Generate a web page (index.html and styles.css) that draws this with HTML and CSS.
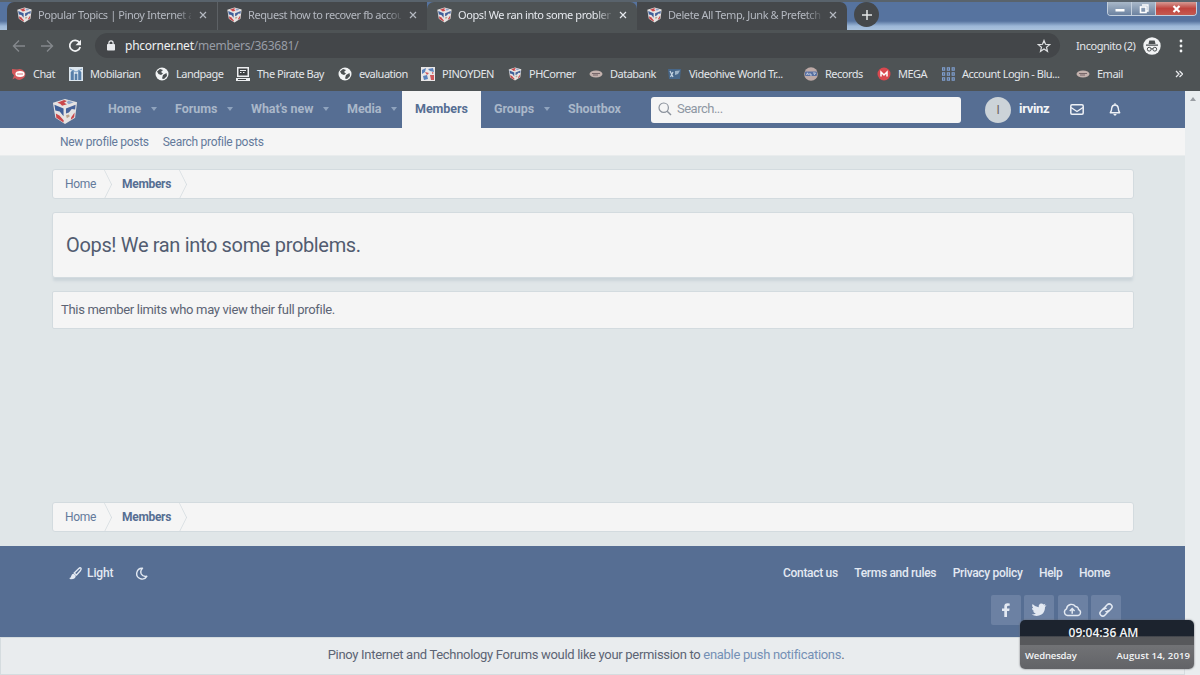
FILE: index.html
```html
<!DOCTYPE html>
<html lang="en">
<head>
  <meta charset="utf-8">
  <title>Oops! We ran into some problems.</title>
  <link rel="stylesheet" href="styles.css">
</head>
<body>
  <svg class="defs" width="0" height="0">
    <symbol id="cube" viewBox="0 0 26 28">
      <path d="M.5 5 L13 1 L25.500 4.500 L23.500 20.500 L13 27 L3 20.500 Z" fill="#e6e3e2"/>
      <path d="M5 5 L12 2 L15 3 L12 5 L15 6.500 L10 8 L8 6 Z" fill="#c9474b"/>
      <path d="M16 2.500 L22 4.500 L17 6.500 L15 5 Z" fill="#8fa6cc"/>
      <path d="M2 7 L11.500 11 V19 L7.500 14 L3 13 Z" fill="#3f5f99"/>
      <path d="M14 11 L24 7 L23.500 12 L20 11.500 L17 15 L14 16 Z" fill="#48639a"/>
      <path d="M3.500 16 L7.500 18.500 L11.500 23 V25.500 L4 20.500 Z" fill="#c9474b"/>
      <path d="M19.500 20 L23 15 L22.500 20 L19 22.500 Z" fill="#c9474b"/>
      <path d="M14 18 L17 17 L18 19 L15 21 Z" fill="#b9a28c"/>
    </symbol>
    <symbol id="globe" viewBox="0 0 14 14">
      <circle cx="7" cy="7" r="6.500" fill="#f1f3f4"/>
      <path d="M2 4.500 L5 2 L8 3 L6 5 L8 6.500 L6 8 L3.500 7 Z M8 8 L11.500 6 L12 9 L9 12 L7 11.500 Z" fill="#4b5052"/>
    </symbol>
    <symbol id="oval" viewBox="0 0 14 8">
      <ellipse cx="7" cy="4" rx="6.500" ry="3.500" fill="#c3b1ad"/>
      <path d="M3 3.500 H11 M4 5 H9" stroke="#77676a" stroke-width="1"/>
    </symbol>
    <symbol id="close" viewBox="0 0 8 8">
      <path d="M1 1 L7 7 M7 1 L1 7" stroke="currentColor" stroke-width="1.200"/>
    </symbol>
  </svg>

  <div class="browser">
    <div class="tabstrip">
      <div class="tab">
        <svg class="favicon"><use href="#cube"/></svg>
        <span class="tab-title">Popular Topics | Pinoy Internet a</span>
        <svg class="tab-close"><use href="#close"/></svg>
      </div>
      <div class="tab tab-divided">
        <svg class="favicon"><use href="#cube"/></svg>
        <span class="tab-title">Request how to recover fb accou</span>
        <svg class="tab-close"><use href="#close"/></svg>
      </div>
      <div class="tab tab-active">
        <svg class="favicon"><use href="#cube"/></svg>
        <span class="tab-title">Oops! We ran into some problem</span>
        <svg class="tab-close"><use href="#close"/></svg>
      </div>
      <div class="tab tab-last">
        <svg class="favicon"><use href="#cube"/></svg>
        <span class="tab-title">Delete All Temp, Junk &amp; Prefetch</span>
        <svg class="tab-close"><use href="#close"/></svg>
      </div>
      <div class="new-tab">
        <svg width="12" height="12" viewBox="0 0 12 12"><path d="M6 1 V11 M1 6 H11" stroke="#e4e6e8" stroke-width="1.500"/></svg>
      </div>
      <div class="window-buttons">
        <span class="win-btn win-min"><svg width="10" height="8" viewBox="0 0 10 8"><rect x="0.500" y="4" width="9" height="2.500" fill="#fff"/></svg></span>
        <span class="win-btn win-max"><svg width="10" height="10" viewBox="0 0 10 10"><path d="M3 1 H9 V7 H7" fill="none" stroke="#fff" stroke-width="1.300"/><rect x="1.500" y="3" width="5.500" height="5.500" fill="none" stroke="#fff" stroke-width="1.600"/></svg></span>
        <span class="win-btn win-close"><svg width="9" height="8" viewBox="0 0 9 8"><path d="M1.500 1 L7.500 7 M7.500 1 L1.500 7" stroke="#fff" stroke-width="2.200"/></svg></span>
      </div>
    </div>

    <div class="toolbar">
      <svg class="tool-icon dim" viewBox="0 0 14 14"><path d="M13 7 H2 M7 1.500 L1.500 7 L7 12.500" fill="none" stroke="currentColor" stroke-width="1.400"/></svg>
      <svg class="tool-icon dim" viewBox="0 0 14 14"><path d="M1 7 H12 M7 1.500 L12.500 7 L7 12.500" fill="none" stroke="currentColor" stroke-width="1.400"/></svg>
      <svg class="tool-icon" viewBox="0 0 14 14"><path d="M11.500 3.800 A5.300 5.300 0 1 0 12.200 8" fill="none" stroke="currentColor" stroke-width="1.700"/><path d="M13 0.800 V6.300 H7.500 Z" fill="currentColor"/></svg>
      <div class="address">
        <svg class="lock" viewBox="0 0 8 11"><rect x="0" y="4" width="8" height="6.500" rx="0.800" fill="#e8eaed"/><path d="M1.900 4.500 V3 a2.100 2.100 0 0 1 4.200 0 V4.500" fill="none" stroke="#e8eaed" stroke-width="1.200"/></svg>
        <span class="url">phcorner.net<span class="path">/members/363681/</span></span>
        <svg class="star" viewBox="0 0 14 14"><path d="M7 1.500 L8.500 5.300 L12.700 5.600 L9.500 8.200 L10.500 12.300 L7 10 L3.500 12.300 L4.500 8.200 L1.300 5.600 L5.500 5.300 Z" fill="none" stroke="#dfe1e3" stroke-width="1.200"/></svg>
      </div>
      <span class="incognito">Incognito (2)</span>
      <svg class="spy" viewBox="0 0 18 18">
        <circle cx="9" cy="9" r="8.700" fill="#f1f3f4"/>
        <path d="M5.500 7 L6.300 3.500 H11.700 L12.500 7 Z M3 7.600 H15 V8.800 H3 Z" fill="#4b5052"/>
        <path d="M8 12 Q9 11.300 10 12" fill="none" stroke="#4b5052"/>
        <circle cx="6.200" cy="12.200" r="1.900" fill="none" stroke="#4b5052"/>
        <circle cx="11.800" cy="12.200" r="1.900" fill="none" stroke="#4b5052"/>
      </svg>
      <svg class="kebab" viewBox="0 0 4 14"><circle cx="2" cy="2" r="1.400"/><circle cx="2" cy="7" r="1.400"/><circle cx="2" cy="12" r="1.400"/></svg>
    </div>

    <div class="bookmarks">
      <span class="bookmark"><svg viewBox="0 0 14 14"><path d="M0 2 L5 2.500 A6 5.300 0 1 1 3 11 L.5 12.500 L2 8.500 L0 6 Z" fill="#d4585b"/><ellipse cx="8" cy="7" rx="4.600" ry="3" fill="#fff"/><circle cx="6" cy="7" r=".8" fill="#d4585b"/><circle cx="8" cy="7" r=".8" fill="#d4585b"/><circle cx="10" cy="7" r=".8" fill="#d4585b"/></svg>Chat</span>
      <span class="bookmark"><svg viewBox="0 0 14 14"><rect width="14" height="14" fill="#dce6ee"/><path d="M2 13 V5 L4.500 3 V13 M6 13 V7 H8 V13 M9.500 13 V3 L12 5 V13" fill="#587fa9" stroke="#587fa9" stroke-width=".6"/><path d="M1 2 L7 5 L13 2" fill="none" stroke="#7ba0c5"/></svg>Mobilarian</span>
      <span class="bookmark"><svg><use href="#globe"/></svg>Landpage</span>
      <span class="bookmark"><svg viewBox="0 0 14 14"><path d="M1 0 H13 V10 H1 Z M0 11 H14 V14 H0 Z" fill="#eceef0"/><rect x="2.500" y="1.500" width="9" height="7" fill="#3c4043"/><path d="M4 3.500 H10 M4 5.500 H5.500 M7 5.500 H8.500" stroke="#eceef0"/><path d="M2 12.500 H10" stroke="#3c4043"/></svg>The Pirate Bay</span>
      <span class="bookmark"><svg><use href="#globe"/></svg>evaluation</span>
      <span class="bookmark"><svg viewBox="0 0 14 14"><rect width="14" height="14" fill="#e9e7e8"/><path d="M1 3 L5 1 L4 5 L1 7 Z M7 2 L12 1 L13 5 L9 4 Z M2 9 L6 8 L7 12 L3 13 Z" fill="#5b83bd"/><path d="M9 8 H13 V13 H10 Z M4 5 L8 6 L6 8 Z M11 5 L13 6 L11 7 Z" fill="#d0585c"/></svg>PINOYDEN</span>
      <span class="bookmark"><svg><use href="#cube"/></svg>PHCorner</span>
      <span class="bookmark"><svg><use href="#oval"/></svg>Databank</span>
      <span class="bookmark"><svg viewBox="0 0 14 14"><path d="M0 2 H13 L12 12 H1 Z" fill="#476789"/><path d="M2 4 L5 10 M5 5 L2.500 10" stroke="#c5d5e3" stroke-width="1.200" fill="none"/><path d="M7 4 L12 3.500 L10 7 L7 8 Z" fill="#9db4c8"/></svg>Videohive World Tr...</span>
      <span class="bookmark"><svg viewBox="0 0 14 14"><circle cx="7" cy="7" r="6.800" fill="#bda9a6"/><rect x="1" y="4.500" width="12" height="4.500" rx="1" fill="#5870a2"/><path d="M2.500 8 L3.500 5.800 L4.500 8 M6 6 V8 H8 M9 6 H11.500 L10 8" stroke="#d9dfea" stroke-width=".8" fill="none"/></svg>Records</span>
      <span class="bookmark"><svg viewBox="0 0 14 14"><circle cx="7" cy="7" r="6.500" fill="#d9484f"/><path d="M4 9.500 V5 L7 8 L10 5 V9.500" fill="none" stroke="#fff" stroke-width="1.500"/></svg>MEGA</span>
      <span class="bookmark"><svg viewBox="0 0 14 14"><path d="M1 2 H14 M1 7 H14 M1 12 H14" stroke="#7f9fcf" stroke-width="3.400" stroke-dasharray="3.200 1.600"/><path d="M2 2 H14 M2 7 H14 M2 12 H14" stroke="#4b5052" stroke-width="1.200" stroke-dasharray="1.200 3.600"/></svg>Account Login - Blu...</span>
      <span class="bookmark"><svg><use href="#oval"/></svg>Email</span>
      <svg class="more" viewBox="0 0 8 8"><path d="M1 1 L4 4 L1 7 M4.500 1 L7.500 4 L4.500 7" fill="none" stroke="#e8eaed" stroke-width="1.300"/></svg>
    </div>
  </div>

  <div class="viewport">
    <div class="page">
      <div class="nav">
        <svg class="logo"><use href="#cube"/></svg>
        <a class="nav-link has-menu">Home</a>
        <a class="nav-link has-menu">Forums</a>
        <a class="nav-link has-menu">What's new</a>
        <a class="nav-link has-menu">Media</a>
        <a class="nav-link selected">Members</a>
        <a class="nav-link has-menu">Groups</a>
        <a class="nav-link">Shoutbox</a>
        <div class="search">
          <svg width="14" height="14" viewBox="0 0 14 14"><circle cx="5.700" cy="5.700" r="4.700" fill="none" stroke="#8b929c" stroke-width="1.200"/><path d="M9.200 9.200 L13 13" stroke="#8b929c" stroke-width="1.400"/></svg>
          <span>Search...</span>
        </div>
        <span class="avatar">I</span>
        <span class="username">irvinz</span>
        <svg class="mail" viewBox="0 0 14 11"><rect x=".8" y=".8" width="12.400" height="9.400" rx="1.200" fill="none" stroke="#eef1f6" stroke-width="1.500"/><path d="M1 3.500 L7 7.500 L13 3.500" fill="none" stroke="#eef1f6" stroke-width="1.400"/></svg>
        <svg class="bell" viewBox="0 0 12 13"><path d="M6 .3 V2 M1.300 9.700 Q2.700 8 2.700 5.300 Q3 2 6 2 Q9 2 9.300 5.300 Q9.300 8 10.700 9.700 Z" fill="none" stroke="#eef1f6" stroke-width="1.400" stroke-linejoin="round"/><path d="M4.300 11 H7.700 Q7.200 12.700 6 12.700 Q4.800 12.700 4.300 11 Z" fill="#eef1f6"/></svg>
      </div>
      <div class="subnav">
        <a>New profile posts</a>
        <a>Search profile posts</a>
      </div>

      <div class="content">
        <div class="breadcrumb">
          <a class="crumb">Home</a>
          <a class="crumb current">Members</a>
        </div>
        <h1>Oops! We ran into some problems.</h1>
        <div class="message">This member limits who may view their full profile.</div>
        <div class="breadcrumb bottom">
          <a class="crumb">Home</a>
          <a class="crumb current">Members</a>
        </div>
      </div>

      <div class="footer">
        <div class="footer-row">
          <a class="style-link"><svg width="13" height="13" viewBox="0 0 13 13"><path d="M11.800 1 Q12.600 1.800 11.500 3.500 L7.500 8 L5.200 6 L9.800 1.500 Q11 .4 11.800 1 Z" fill="none" stroke="#e3e9f2" stroke-width="1.300"/><path d="M4.700 6.700 L6.800 8.600 Q7 12.500 1.500 12.300 Q.5 12 .4 11 Q2 11 2.200 9 Q2.700 6.800 4.700 6.700 Z" fill="#e3e9f2"/></svg>Light</a>
          <svg class="moon" width="13" height="13" viewBox="0 0 13 13"><path d="M7.500 1.200 A5.400 5.400 0 1 0 11.800 9.300 Q7.800 10 6.300 7 Q4.800 3.600 7.500 1.200 Z" fill="none" stroke="#e3e9f2" stroke-width="1.400" stroke-linejoin="round"/></svg>
          <div class="footer-links">
            <a>Contact us</a>
            <a>Terms and rules</a>
            <a>Privacy policy</a>
            <a>Help</a>
            <a>Home</a>
          </div>
        </div>
        <div class="social">
          <a><svg width="16" height="16" viewBox="0 0 16 16"><path d="M6.300 15 V9 H4 V6.400 H6.300 V4.500 Q6.300 1.300 9.500 1.300 L11.700 1.500 V3.800 H10.300 Q9 3.800 9 5 V6.400 H11.600 L11.200 9 H9 V15 Z"/></svg></a>
          <a><svg width="16" height="16" viewBox="0 0 16 16"><path d="M15.500 3.600 L14 5 Q14.200 10 10.500 12.600 Q5.500 15.300 .6 12.500 Q3.300 12.600 4.900 11.300 Q2.800 11 2 9.200 H3.300 Q1 8.200 .9 5.900 L2.300 6.300 Q.2 4.400 1.500 2 Q4.200 5 7.700 5.200 Q7.300 2.900 9 1.800 Q11.100 .9 12.600 2.500 L14.500 1.800 L13.400 3.600 Z"/></svg></a>
          <a><svg width="19" height="16" viewBox="0 0 19 16"><path d="M4.500 13.500 A3.500 3.500 0 0 1 3.600 6.800 A4.900 4.900 0 0 1 12.500 4.500 A3 3 0 0 1 15.500 7.700 A3 3 0 0 1 15 13.500 Z" fill="none" stroke="#e3e9f2" stroke-width="1.400"/><path d="M9.200 11.800 V7 M6.800 9 L9.200 6.500 L11.600 9" fill="none" stroke="#e3e9f2" stroke-width="1.500"/></svg></a>
          <a><svg width="16" height="16" viewBox="0 0 16 16"><g fill="none" stroke="#e3e9f2" stroke-width="1.500" transform="rotate(-45 8 8)"><path d="M9.500 9.500 Q8.300 10.800 6.500 10.800 H3.500 A2.800 2.800 0 0 1 3.500 5.200 H6.500 Q9 5.200 9.300 7.500"/><path d="M6.500 6.500 Q7.700 5.200 9.500 5.200 H12.500 A2.800 2.800 0 0 1 12.500 10.800 H9.500 Q7 10.800 6.700 8.500"/></g></svg></a>
        </div>
      </div>
      <div class="notice"><span>Pinoy Internet and Technology Forums would like your permission to <a>enable push notifications</a>.</span></div>
    </div>
    <div class="scrollbar"></div>
  </div>

  <!-- desktop clock gadget floating over the window -->
  <div class="clock">
    <div class="time">09:04:36 AM</div>
    <div class="date"><span>Wednesday</span><span class="day">August 14, 2019</span></div>
  </div>
</body>
</html>
```
FILE: styles.css
```css
* {
  box-sizing: border-box;
}
body {
  margin: 0;
  width: 1200px;
  height: 675px;
  overflow: hidden;
  font-family: Roboto, sans-serif;
  font-size: 13px;
  letter-spacing: -0.31px;
  background: #e0e6e8;
}
svg {
  display: block;
  flex: none;
}
.defs {
  position: absolute;
}

/* browser window */
.browser {
  height: 91px;
  background: #4e5355;
  font-family: "Noto Sans", sans-serif;
  font-size: 11px;
  letter-spacing: -0.5px;
  color: #e3e6ea;
}
.tabstrip {
  display: flex;
  height: 30px;
  padding-left: 7px;
  border-top: 2px solid #59636c;
  background: linear-gradient(#56739f 0, #56739f 68%, #9db8d8 86%, #a9c1dc 100%);
}
.tab {
  display: flex;
  align-items: center;
  width: 210px;
  padding-left: 10px;
  padding-bottom: 3px;
  background: #45484b;
  color: #b4b8c0;
}
.tab:first-child {
  border-top-left-radius: 7px;
}
.tab-divided {
  box-shadow: inset 1px 0 #5d6165;
}
.tab-active {
  background: #4e5355;
  color: #e6e9ee;
  border-radius: 7px 7px 0 0;
}
.tab-last {
  border-top-right-radius: 7px;
}
.favicon {
  width: 15px;
  height: 16px;
  margin-right: 6px;
}
.tab-title {
  width: 153px;
  white-space: nowrap;
  letter-spacing: -0.41px;
  -webkit-mask-image: linear-gradient(90deg, #000 90%, transparent 102%);
  mask-image: linear-gradient(90deg, #000 90%, transparent 102%);
}
.tab-close {
  width: 8px;
  height: 8px;
  margin-left: 8px;
}
.new-tab {
  display: flex;
  align-items: center;
  justify-content: center;
  width: 25px;
  height: 25px;
  margin-left: 7px;
  border-radius: 50%;
  background: #45484b;
}
.window-buttons {
  display: flex;
  width: 90px;
  height: 14px;
  margin-left: auto;
  margin-right: 3px;
  border: 1px solid #c3cfdd;
  border-top: 0;
  border-radius: 0 0 4px 4px;
  overflow: hidden;
}
.win-btn {
  display: flex;
  align-items: center;
  justify-content: center;
  width: 24px;
  background: linear-gradient(#a9b8c9, #6c82a0);
  border-right: 1px solid #c3cfdd;
}
.win-close {
  flex: 1;
  border: 0;
  background: linear-gradient(#d69a93, #c0443e 50%, #c45a50);
}
.toolbar {
  display: flex;
  align-items: center;
  height: 31px;
  padding-left: 12px;
}
.tool-icon {
  width: 14px;
  height: 14px;
  margin-right: 14px;
  color: #f1f3f4;
}
.dim {
  color: #84888c;
}
.address {
  display: flex;
  align-items: center;
  width: 965px;
  height: 25px;
  margin-left: -1px;
  padding-left: 12px;
  border-radius: 13px;
  background: #434649;
}
.lock {
  width: 8px;
  height: 11px;
  margin-right: 10px;
}
.url {
  font-size: 12px;
  letter-spacing: -0.25px;
  color: #f0f2f4;
}
.path {
  color: #989da6;
}
.star {
  width: 14px;
  height: 14px;
  margin-left: auto;
  margin-right: 9px;
}
.incognito {
  width: 60px;
  margin-left: 16px;
  white-space: nowrap;
  letter-spacing: -0.45px;
}
.spy {
  width: 18px;
  height: 18px;
  margin-left: 7px;
}
.kebab {
  width: 4px;
  height: 14px;
  margin-left: 18px;
  fill: #f1f3f4;
}
.bookmarks {
  display: grid;
  grid-template-columns: 57px 86px 81px 102px 83px 87px 81px 79px 136px 73px 64px 135px 99px 8px;
  align-items: center;
  height: 25px;
  padding-left: 12px;
}
.bookmark {
  display: flex;
  align-items: center;
  gap: 7px;
  white-space: nowrap;
}
.bookmark svg {
  width: 14px;
  height: 14px;
}
.more {
  width: 8px;
  height: 8px;
}

/* forum page */
.viewport {
  display: flex;
  height: 584px;
}
.page {
  width: 1185px;
  display: flex;
  flex-direction: column;
}
.scrollbar {
  width: 15px;
  padding-top: 6px;
  background: #e9edef;
}
.scrollbar::before {
  content: "";
  display: block;
  width: 0;
  margin-left: 5px;
  border: 3px solid transparent;
  border-top: 0;
  border-bottom: 4px solid #9a9ea3;
}
.nav {
  display: grid;
  grid-template-columns: 43px 67px 76px 96px 68px 79px 74px 96px 310px 24px 26px 33px 34px 45px 1fr;
  align-items: center;
  height: 37px;
  padding-left: 52px;
  background: #566e93;
  color: #a9b7c9;
}
.logo {
  width: 26px;
  height: 27px;
  margin-top: 3px;
}
.nav-link {
  display: flex;
  align-items: center;
  height: 37px;
  padding-left: 13px;
  padding-bottom: 2px;
  font-weight: 700;
  font-size: 12.500px;
  letter-spacing: -0.05px;
  white-space: nowrap;
}
.has-menu::after {
  content: "";
  margin-left: auto;
  margin-right: 5px;
  border: 3.500px solid transparent;
  border-top: 4px solid #8fa3be;
  border-bottom: 0;
}
.selected {
  background: #f5f5f5;
  color: #566e93;
}
.search {
  display: flex;
  align-items: center;
  gap: 5px;
  height: 26px;
  padding-left: 7px;
  padding-bottom: 2px;
  border-radius: 3px;
  background: #f5f5f5;
  color: #8e97a3;
}
.search span {
  letter-spacing: -0.5px;
}
.avatar {
  grid-column: 11;
  display: flex;
  align-items: center;
  justify-content: center;
  width: 26px;
  height: 26px;
  border-radius: 50%;
  background: #ccd3d8;
  color: #6b625f;
  font-size: 12px;
}
.username {
  grid-column: 12;
  padding-left: 8px;
  padding-bottom: 2px;
  color: #f3f5f8;
  font-weight: 700;
}
.mail {
  grid-column: 13;
  width: 14px;
  height: 11px;
  margin-left: 26px;
  margin-bottom: 1px;
}
.bell {
  grid-column: 14;
  width: 12px;
  height: 13px;
  margin-left: 31px;
  margin-bottom: 1px;
}
.subnav {
  display: flex;
  gap: 14px;
  height: 28px;
  padding-left: 60px;
  line-height: 28px;
  font-size: 12px;
  letter-spacing: -0.29px;
  background: #f5f5f5;
  border-bottom: 1px solid #e9eced;
  color: #647a9b;
}
.content {
  width: 1082px;
  height: 390px;
  margin-left: 52px;
  padding-top: 13px;
  display: flex;
  flex-direction: column;
}
.breadcrumb {
  display: flex;
  height: 30px;
  overflow: hidden;
  border: 1px solid #d3dbdf;
  border-radius: 3px;
  background: #f5f5f5;
  font-size: 12px;
  line-height: 28px;
  color: #647a9b;
}
.crumb {
  position: relative;
  padding: 0 14px 0 12px;
}
.crumb::after {
  content: "";
  position: absolute;
  top: 4px;
  right: -5px;
  width: 20px;
  height: 20px;
  border-top: 1px solid #d3dbdf;
  border-right: 1px solid #d3dbdf;
  transform: scaleX(.5) rotate(45deg);
}
.current {
  font-weight: 700;
  color: #566e93;
}
h1 {
  height: 66px;
  margin: 13px 0 0;
  padding-left: 13px;
  border: 1px solid #d3dbdf;
  border-radius: 3px;
  box-shadow: 0 4px 3px -1px #cbd4d9;
  background: #f5f5f5;
  color: #525c70;
  font-size: 20px;
  font-weight: 400;
  letter-spacing: -0.34px;
  line-height: 64px;
}
.message {
  height: 38px;
  margin-top: 13px;
  padding-left: 8px;
  border: 1px solid #d3dbdf;
  border-radius: 2px;
  background: #f5f5f5;
  color: #5c6474;
  line-height: 35px;
}
.bottom {
  margin-top: auto;
  margin-bottom: 14px;
}
.footer {
  height: 91px;
  padding: 17px 64px 0 69px;
  background: #566e93;
  color: #e3e9f2;
  font-size: 12px;
  font-weight: 500;
}
.footer-row {
  display: flex;
  align-items: center;
  height: 20px;
}
.style-link {
  display: flex;
  align-items: center;
  gap: 5px;
  letter-spacing: -0.1px;
}
.moon {
  margin-left: 21px;
}
.footer-links {
  display: flex;
  gap: 16.500px;
  margin-left: auto;
  margin-right: 11px;
}
.social {
  display: flex;
  justify-content: flex-end;
  gap: 3.500px;
  margin-top: 12px;
}
.social a {
  display: flex;
  align-items: center;
  justify-content: center;
  width: 30px;
  height: 30px;
  border-radius: 2px;
  background: #6c81a3;
  fill: #e3e9f2;
}
.notice {
  height: 38px;
  padding-right: 13px;
  border: 1px solid #d5dcdf;
  background: #e9ecee;
  color: #5c6474;
  text-align: center;
  line-height: 34px;
}
.notice a {
  color: #7590b5;
}

.clock {
  position: absolute;
  left: 1020px;
  top: 620px;
  width: 174px;
  height: 49px;
  border-radius: 5px;
  overflow: hidden;
  background: linear-gradient(#1c232e 0, #1c232e 33%, #57585b 34%, #57585b 51%, #717275 52%, #626367 100%);
  box-shadow: 0 0 2px #62656a;
  color: #f4f5f6;
  font-family: "Open Sans", sans-serif;
  letter-spacing: 0;
}
.time {
  height: 25px;
  padding-right: 7px;
  text-align: center;
  font-size: 12px;
  font-weight: 600;
  line-height: 26px;
}
.date {
  display: flex;
  justify-content: space-between;
  padding: 0 4px 0 5px;
  font-size: 9.500px;
  font-weight: 600;
  letter-spacing: -0.15px;
  line-height: 21px;
}
.day {
  letter-spacing: 0.1px;
}
```
